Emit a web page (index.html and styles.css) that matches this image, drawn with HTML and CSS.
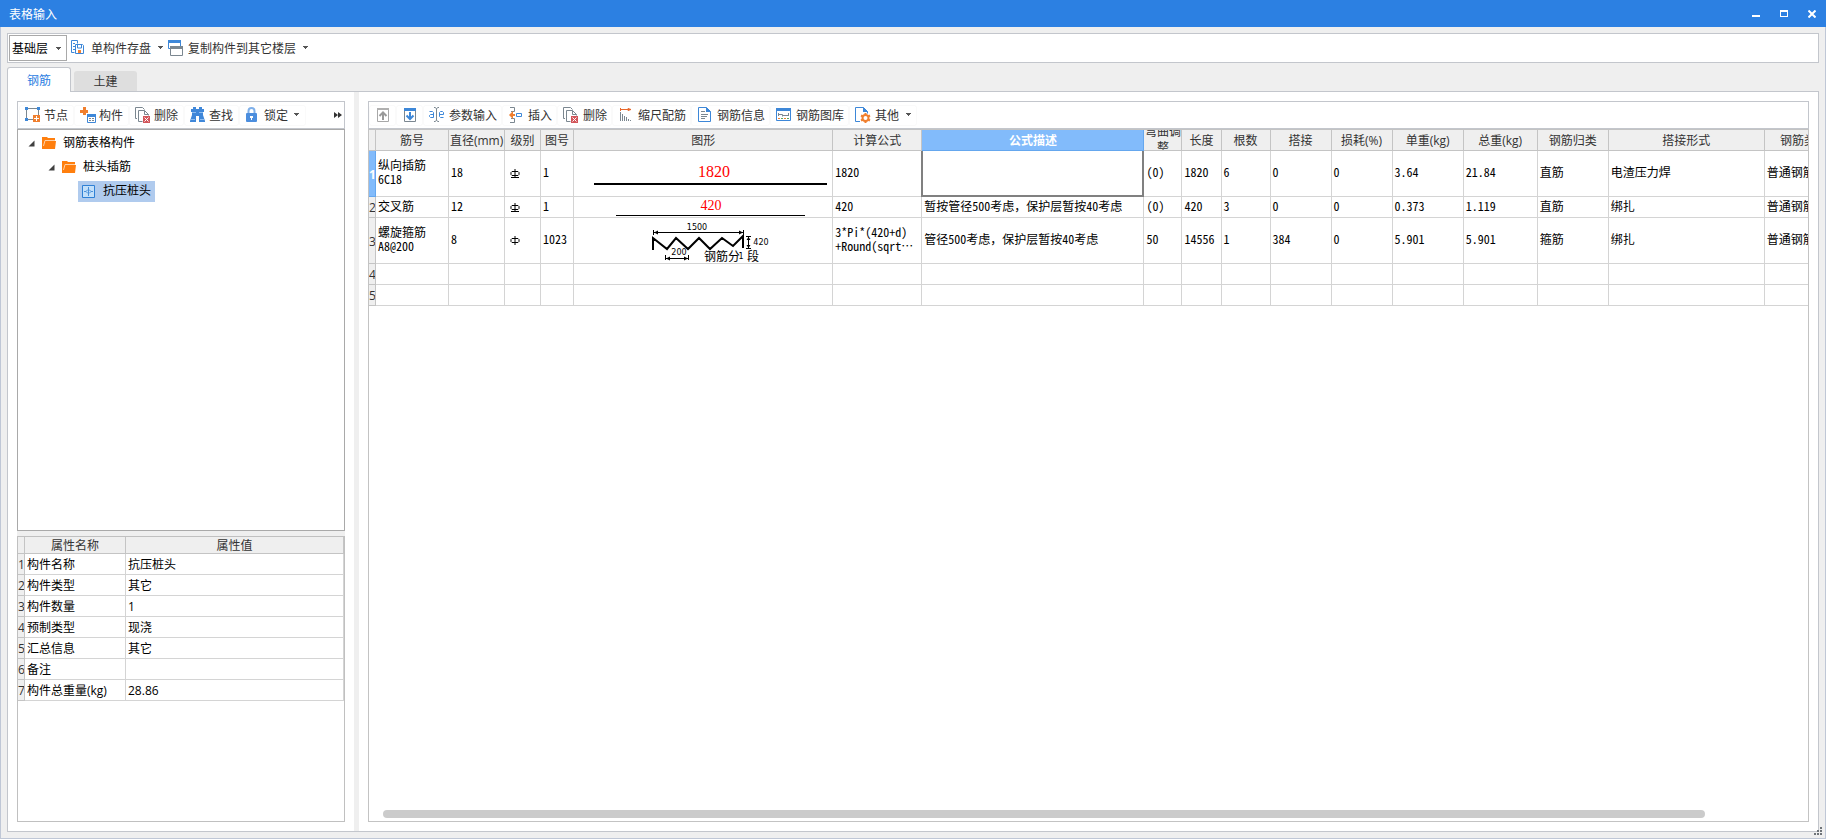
FILE: index.html
```html
<!DOCTYPE html>
<html lang="zh-CN">
<head>
<meta charset="utf-8">
<title>表格输入</title>
<link rel="stylesheet" href="styles.css">
</head>
<body>
<svg class="defs" width="0" height="0" aria-hidden="true">
  <symbol id="caret" viewBox="0 0 6 4"><path d="M0 0h5v1h-1v1h-1v1h-1v-1h-1v-1h-1z" fill="#555"/></symbol>
  <symbol id="delete" viewBox="0 0 16 16">
    <path d="M2 11.500H.5V.5h7l2 2" fill="none" stroke="#7b8790"/>
    <path d="M3.500 14.500V3.500h6l4 4v1M9.500 3.500v4h4M3.500 14.500h4" fill="none" stroke="#7b8790"/>
    <rect x="8" y="9" width="7" height="7" fill="#d2555a"/>
    <path d="M9.500 10.500l4 4m0-4l-4 4" stroke="#fff"/>
  </symbol>
  <symbol id="folder" viewBox="0 0 15 13">
    <path d="M0 12V0h5l1 1h7v3h1l-1 8z" fill="#ff7f0e"/><path d="M1.500 9l1.500-5.500h10" fill="none" stroke="#ffd3a8"/>
  </symbol>
  <symbol id="expanded" viewBox="0 0 7 7"><path d="M6.500.5v6h-6z" fill="#404040"/></symbol>
  <symbol id="grade-plain" viewBox="0 0 10 11"><path d="M2 3.500h6l1 1v2l-1 1H2l-1-1v-2zM5 1v9" fill="none" stroke="#000"/></symbol>
  <symbol id="grade-ribbed" viewBox="0 0 10 11"><path d="M2 3.500h6l1 1v2l-1 1H2l-1-1v-2zM5 1v9M1 9.500h8" fill="none" stroke="#000"/></symbol>
</svg>

<header class="titlebar">
  <h1 class="title">表格输入</h1>
  <div class="window-buttons">
    <button class="window-button" aria-label="最小化"><svg width="8" height="8"><rect y="5" width="8" height="2" fill="#fff"/></svg></button>
    <button class="window-button" aria-label="最大化"><svg width="8" height="8"><path d="M0 0h8v7H0zM1 2v4h6V2z" fill="#fff" fill-rule="evenodd"/></svg></button>
    <button class="window-button" aria-label="关闭"><svg width="8" height="8"><path d="M.5.500l7 7m0-7l-7 7" stroke="#fff" stroke-width="2"/></svg></button>
  </div>
</header>

<main class="workspace">
  <div class="mainbar">
    <div class="combo">
      <select class="combo-select" aria-label="楼层"><option>基础层</option></select>
      <svg class="combo-caret" width="6" height="4"><use href="#caret"/></svg>
    </div>
    <button class="main-button">
      <svg width="16" height="16" viewBox="0 0 16 16">
        <path d="M3.500 12.500h-3V.5h6v3M2 3.500h2M2 6.500h2M2 9.500h2" fill="none" stroke="#3d87d8"/>
        <path d="M4.500 4.500h7l1 1v8h-8z" fill="#fff" stroke="#3d87d8"/>
        <path d="M6.500 5v3h4V5" fill="none" stroke="#3d87d8"/><rect x="7" y="10" width="3" height="3" fill="#f58231"/>
      </svg>
      <span class="label">单构件存盘</span><svg class="caret" width="6" height="4"><use href="#caret"/></svg>
    </button>
    <button class="main-button">
      <svg width="16" height="16" viewBox="0 0 16 16">
        <path d="M.5.500h12v8H.5z" fill="#fff" stroke="#3d87d8"/><rect width="13" height="3" fill="#3d87d8"/>
        <path d="M2.500 6.500h12v9h-12z" fill="#fff" stroke="#7b8790"/><rect x="2" y="6" width="13" height="3" fill="#7b8790"/>
      </svg>
      <span class="label">复制构件到其它楼层</span><svg class="caret" width="6" height="4"><use href="#caret"/></svg>
    </button>
  </div>

  <nav class="tabs">
    <button class="tab tab-active">钢筋</button>
    <button class="tab">土建</button>
  </nav>

  <div class="pane">
    <section class="side">
      <div class="toolbar side-toolbar">
        <button class="tool">
          <svg width="16" height="16" viewBox="0 0 16 16">
            <path d="M1.500 1.500h12v11h-12z" fill="none" stroke="#7b8790"/>
            <path d="M0 0h3v3H0zM12 0h3v3h-3zM0 11h3v3H0z" fill="#3d87d8"/>
            <rect x="8" y="8" width="7" height="7" fill="#f07f2e"/><path d="M9 11.500h5M11.500 9v5" stroke="#fff"/>
          </svg><span class="label">节点</span>
        </button>
        <button class="tool">
          <svg width="16" height="16" viewBox="0 0 16 16">
            <path d="M3 0h3v3h2v3H6v2H3V6H0V3h3z" fill="#f07f2e"/>
            <path d="M7.500 7.500h8v8h-8z" fill="#fff" stroke="#3d87d8"/><rect x="7" y="7" width="9" height="3" fill="#3d87d8"/>
            <path d="M9 11.500h2m1 0h2M9 13.500h2m1 0h2" stroke="#7b8790"/>
          </svg><span class="label">构件</span>
        </button>
        <button class="tool"><svg width="16" height="16"><use href="#delete"/></svg><span class="label">删除</span></button>
        <button class="tool">
          <svg width="16" height="16" viewBox="0 0 16 16">
            <path d="M3 0h3v2h3V0h3v2h2v3h-1v3l2 6v1H9V9H6v6H0v-1l2-6V5H1V2h2z" fill="#3f87d9"/>
            <path d="M2 5.500h4m3 0h4M1 12.500h4m5 0h4" stroke="#8fbdf0"/>
          </svg><span class="label">查找</span>
        </button>
        <button class="tool">
          <svg width="16" height="16" viewBox="0 0 16 16">
            <path d="M3.500 7V4a3 3 0 0 1 6 0v3" fill="none" stroke="#7fb0ea" stroke-width="2"/>
            <rect x="1" y="6" width="11" height="9" rx="1" fill="#4c8ede"/><path d="M5 9h3v2H7v2H6v-2H5z" fill="#fff"/>
          </svg><span class="label">锁定</span><svg class="caret" width="6" height="4"><use href="#caret"/></svg>
        </button>
        <button class="more" aria-label="更多"><svg width="8" height="6"><path d="M0 0l4 3-4 3zM4 0l4 3-4 3z" fill="#333"/></svg></button>
      </div>

      <ul class="tree">
        <li class="node">
          <svg width="7" height="7"><use href="#expanded"/></svg>
          <svg class="folder" width="15" height="13"><use href="#folder"/></svg>
          <span>钢筋表格构件</span>
        </li>
        <li class="node node-child">
          <svg width="7" height="7"><use href="#expanded"/></svg>
          <svg class="folder" width="15" height="13"><use href="#folder"/></svg>
          <span>桩头插筋</span>
        </li>
        <li class="node node-leaf">
          <span class="selected">
            <svg width="13" height="13" viewBox="0 0 13 13">
              <path d="M.5.500h12v12H.5z" fill="#c3e0fa" stroke="#2f80d5"/>
              <path d="M2 6.500h2M9 6.500h2M6.500 2v9M4 6.500l2-2h1l2 2-2 2H6z" stroke="#4a90da" fill="none"/>
            </svg>
            <span>抗压桩头</span>
          </span>
        </li>
      </ul>

      <div class="props">
        <table class="grid props-grid">
          <colgroup><col class="w-num"><col class="w-name"><col></colgroup>
          <thead><tr><th></th><th>属性名称</th><th>属性值</th></tr></thead>
          <tbody>
            <tr><th>1</th><td>构件名称</td><td>抗压桩头</td></tr>
            <tr><th>2</th><td>构件类型</td><td>其它</td></tr>
            <tr><th>3</th><td>构件数量</td><td>1</td></tr>
            <tr><th>4</th><td>预制类型</td><td>现浇</td></tr>
            <tr><th>5</th><td>汇总信息</td><td>其它</td></tr>
            <tr><th>6</th><td>备注</td><td></td></tr>
            <tr><th>7</th><td>构件总重量(kg)</td><td>28.86</td></tr>
          </tbody>
        </table>
      </div>
    </section>

    <div class="splitter"></div>

    <section class="content">
      <div class="toolbar">
        <button class="tool" aria-label="上移"><svg width="16" height="16" viewBox="0 0 16 16">
          <path d="M2.500 1.500h11v13h-11z" fill="#fff" stroke="#a8a8a8"/><rect x="2" y="1" width="12" height="2" fill="#b0b0b0"/><path d="M8 13V6M4.500 9L8 5.500 11.500 9" fill="none" stroke="#999" stroke-width="2"/></svg></button>
        <button class="tool" aria-label="下移"><svg width="16" height="16" viewBox="0 0 16 16">
          <path d="M2.500 1.500h11v13h-11z" fill="#fff" stroke="#7b8790"/><rect x="2" y="1" width="12" height="3" fill="#3d87d8"/><path d="M8 5v7M4.500 8.500L8 12l3.500-3.500" fill="none" stroke="#3d87d8" stroke-width="2"/></svg></button>
        <button class="tool"><svg width="16" height="16" viewBox="0 0 16 16">
          <path d="M.5 4.500h3l1 1v5H1.500l-1-1v-1l1-1h3M10.500 7.500h4V5.500l-1-1h-2l-1 1v4l1 1h3" fill="none" stroke="#3d87d8"/>
          <path d="M5 .5h1l1.500 1L9 .5h1M7.500 1.500v12M5 14.500h1l1.500-1 1.500 1h1" fill="none" stroke="#7b8790"/></svg><span class="label">参数输入</span></button>
        <button class="tool"><svg width="16" height="16" viewBox="0 0 16 16">
          <path d="M2 .5h4.500v4H3M2 15.500h4.500v-4H3" fill="none" stroke="#7b8790"/>
          <path d="M1 8l4-4v3h2v2H5v3z" fill="#f07f2e"/><path d="M8.500 6.500h5v3h-5z" fill="none" stroke="#3d87d8"/></svg><span class="label">插入</span></button>
        <button class="tool"><svg width="16" height="16"><use href="#delete"/></svg><span class="label">删除</span></button>
        <button class="tool"><svg width="16" height="16" viewBox="0 0 16 16">
          <path d="M2 2.500h8M10 1.500l3 1-3 1z" fill="#e8682c" stroke="#e8682c"/><path d="M2.500 1v3" stroke="#e8682c"/>
          <path d="M2.500 5v9M4.500 7v7M6.500 9v5M8.500 10v4M10.500 12v2M12.500 13v1" stroke="#7b8790"/></svg><span class="label">缩尺配筋</span></button>
        <button class="tool"><svg width="16" height="16" viewBox="0 0 16 16">
          <path d="M1.500.500h8l4 4v10h-12z" fill="#fff" stroke="#3d87d8"/><path d="M9 0l5 5H9z" fill="#3d87d8"/>
          <path d="M4 4.500h4M4 7.500h7M4 9.500h6M4 11.500h4" stroke="#7b8790"/></svg><span class="label">钢筋信息</span></button>
        <button class="tool"><svg width="16" height="16" viewBox="0 0 16 16">
          <path d="M.5 1.500h14v12H.5z" fill="#fff" stroke="#3d87d8"/><rect y="1" width="15" height="3" fill="#3d87d8"/>
          <path d="M2.500 6v3M2.500 7.500h4v2M7 8.500h5M12.500 6v3" fill="none" stroke="#7b8790"/><path d="M2 11.500h2m4 0h2" stroke="#f07f2e"/><path d="M5 11.500h2m4 0h2" stroke="#5aa860"/></svg><span class="label">钢筋图库</span></button>
        <button class="tool"><svg width="16" height="16" viewBox="0 0 16 16">
          <path d="M5 14.500H.5V.5h8l4 4v2" fill="none" stroke="#3d87d8"/><path d="M8 0l5 5H8z" fill="#3d87d8"/>
          <circle cx="10.500" cy="11" r="3" fill="#fff" stroke="#f07f2e" stroke-width="2"/><path d="M10.500 6v2M10.500 14v2M6 8.500l2 1M13 12.500l2 1M6 13.500l2-1M13 9.500l2-1" stroke="#f07f2e" stroke-width="2"/></svg><span class="label">其他</span><svg class="caret" width="6" height="4"><use href="#caret"/></svg></button>
      </div>

      <div class="sheet">
        <table class="grid rebar-grid">
          <colgroup>
            <col class="w-num"><col class="w-bar"><col class="w-dia"><col class="w-grade"><col class="w-fig"><col class="w-shape"><col class="w-formula"><col class="w-desc"><col class="w-bend"><col class="w-len"><col class="w-count"><col class="w-lap"><col class="w-lap"><col class="w-unit"><col class="w-total"><col class="w-unit"><col class="w-joint"><col class="w-type">
          </colgroup>
          <thead>
            <tr><th></th><th>筋号</th><th>直径(mm)</th><th>级别</th><th>图号</th><th>图形</th><th>计算公式</th><th class="current">公式描述</th><th class="wrap-cell"><div class="wrap-head">弯曲调整</div></th><th>长度</th><th>根数</th><th>搭接</th><th>损耗(%)</th><th>单重(kg)</th><th>总重(kg)</th><th>钢筋归类</th><th>搭接形式</th><th>钢筋类型</th></tr>
          </thead>
          <tbody>
            <tr class="tall">
              <th class="current">1</th><td>纵向插筋<br>6C18</td><td>18</td>
              <td class="grade-cell"><svg class="grade" width="10" height="11"><use href="#grade-ribbed"/></svg></td>
              <td>1</td>
              <td class="shape"><svg class="drawing" width="258" height="45"><text class="dim-large" x="140" y="26">1820</text><path d="M20 33h233" stroke="#000" stroke-width="2"/></svg></td>
              <td>1820</td><td class="editing"><div class="cursor"></div></td><td>(0)</td><td>1820</td><td>6</td><td>0</td><td>0</td><td>3.64</td><td>21.84</td><td>直筋</td><td>电渣压力焊</td><td>普通钢筋</td>
            </tr>
            <tr>
              <th>2</th><td>交叉筋</td><td>12</td>
              <td class="grade-cell"><svg class="grade" width="10" height="11"><use href="#grade-ribbed"/></svg></td>
              <td>1</td>
              <td class="shape"><svg class="drawing" width="258" height="20"><text class="dim-medium" x="137" y="13">420</text><path d="M42 18.500h189" stroke="#000"/></svg></td>
              <td>420</td><td>暂按管径500考虑<span class="full">，</span>保护层暂按40考虑</td><td>(0)</td><td>420</td><td>3</td><td>0</td><td>0</td><td>0.373</td><td>1.119</td><td>直筋</td><td>绑扎</td><td>普通钢筋</td>
            </tr>
            <tr class="tall">
              <th>3</th><td>螺旋箍筋<br>A8@200</td><td>8</td>
              <td class="grade-cell"><svg class="grade" width="10" height="11"><use href="#grade-plain"/></svg></td>
              <td>1023</td>
              <td class="shape"><svg class="drawing" width="258" height="45">
                <path d="M79.500 12v5M169.500 12v5M79 14.500h91M91.500 37v5M114.500 37v5M91 40.500h23M172 18.500h5M172 30.500h5M174.500 18v13" fill="none" stroke="#000"/>
                <path d="M80 14.500l4-2v4zM169 14.500l-4-2v4zM92 40.500l4-2v4zM114 40.500l-4-2v4zM174.500 19l-2 3h4zM174.500 30l-2-3h4z"/>
                <path d="M79 32V20l14 11 9-11 12 11 11-11 11 11 12-11 11 8 10-10v12" fill="none" stroke="#000" stroke-width="2"/>
                <text class="dim" x="123" y="12">1500</text><text class="dim" x="187" y="27">420</text><text class="dim" x="105" y="37">200</text>
                <text class="note" x="130" y="43">钢筋分</text><text class="dim" x="167" y="41">1</text><text class="note" x="173" y="43">段</text>
              </svg></td>
              <td>3*Pi*(420+d)<br>+Round(sqrt⋯</td><td>管径500考虑<span class="full">，</span>保护层暂按40考虑</td><td>50</td><td>14556</td><td>1</td><td>384</td><td>0</td><td>5.901</td><td>5.901</td><td>箍筋</td><td>绑扎</td><td>普通钢筋</td>
            </tr>
            <tr><th>4</th><td></td><td></td><td></td><td></td><td></td><td></td><td></td><td></td><td></td><td></td><td></td><td></td><td></td><td></td><td></td><td></td><td></td></tr>
            <tr><th>5</th><td></td><td></td><td></td><td></td><td></td><td></td><td></td><td></td><td></td><td></td><td></td><td></td><td></td><td></td><td></td><td></td><td></td></tr>
          </tbody>
        </table>
        <div class="scroll-thumb"></div>
      </div>
    </section>
  </div>
</main>
<svg class="grip" width="8" height="8"><path d="M6 0h2v2H6zM3 3h2v2H3zM6 3h2v2H6zM0 6h2v2H0zM3 6h2v2H3zM6 6h2v2H6z" fill="#6f7478"/></svg>
</body>
</html>
```
FILE: styles.css
```css
* {
  box-sizing: border-box;
}

body {
  display: flex;
  flex-direction: column;
  height: 100vh;
  margin: 0;
  overflow: hidden;
  background: #efefef;
  color: #333;
  font: 12px/16px "Open Sans", "Noto Sans CJK SC", sans-serif;
}

button,
select {
  margin: 0;
  padding: 0;
  border: 0;
  background: none;
  color: inherit;
  font: inherit;
}

svg {
  display: block;
  flex: none;
}

.defs {
  position: absolute;
}

/* Title bar */
.titlebar {
  display: flex;
  flex: none;
  align-items: center;
  justify-content: space-between;
  height: 27px;
  padding: 0 10px 0 9px;
  background: #2c80e2;
  color: #fff;
}

.title {
  margin: 0;
  padding-top: 2px;
  font-size: 12px;
  font-weight: 400;
}

.window-buttons {
  display: flex;
  gap: 20px;
}

.window-button {
  width: 8px;
  height: 8px;
}

/* Window body */
.workspace {
  display: flex;
  flex: 1;
  flex-direction: column;
  min-height: 0;
  padding: 6px;
  border: 1px solid #bfc7d6;
  border-top: 0;
}

.mainbar {
  display: flex;
  flex: none;
  align-items: center;
  height: 30px;
  padding-left: 1px;
  border: 1px solid #c3c6cc;
  background: #fff;
}

.combo {
  position: relative;
  width: 58px;
  height: 26px;
  border: 1px solid #a9a9a9;
  color: #000;
}

.combo-select {
  width: 100%;
  height: 100%;
  padding: 2px 0 0 2px;
  appearance: none;
}

.combo-caret {
  position: absolute;
  top: 11px;
  right: 4px;
}

.main-button {
  display: flex;
  align-items: center;
  gap: 4px;
  height: 26px;
  padding-left: 4px;
}

.label {
  padding-top: 2px;
}

.caret {
  margin-left: 3px;
}

.tabs {
  display: flex;
  flex: none;
  align-items: flex-end;
  gap: 3px;
  height: 28px;
}

.tab {
  width: 63px;
  height: 20px;
  padding-top: 2px;
  border-radius: 3px 3px 0 0;
  background: #dedede;
}

.tab-active {
  z-index: 1;
  width: 64px;
  height: 25px;
  margin-bottom: -1px;
  border: 1px solid #c3c6cc;
  border-bottom: 0;
  background: #fff;
  color: #2c80e2;
}

.pane {
  display: flex;
  flex: 1;
  min-height: 0;
  border: 1px solid #c3c6cc;
  background: #fff;
}

.side {
  display: flex;
  flex: none;
  flex-direction: column;
  width: 346px;
  padding: 9px;
}

.splitter {
  flex: none;
  width: 5px;
  background: #efefef;
}

.content {
  display: flex;
  flex: 1;
  flex-direction: column;
  min-width: 0;
  padding: 9px;
}

/* Toolbars */
.toolbar {
  display: flex;
  flex: none;
  align-items: center;
  height: 28px;
  border: 1px solid #c3c6cc;
}

.tool {
  display: flex;
  flex: none;
  align-items: center;
  gap: 4px;
  height: 21px;
  padding: 0 5px 0 6px;
  border-radius: 3px;
  box-shadow: inset 0 0 0 1px #fafafa;
}

.side-toolbar {
  padding-left: 1px;
}

.side-toolbar .tool {
  gap: 3px;
  padding-right: 6px;
}

.more {
  margin: 0 2px 0 auto;
}

/* Component tree */
.tree {
  flex: 401;
  margin: 0;
  padding: 1px 0 0;
  border: 1px solid #a9a9a9;
  color: #000;
  list-style: none;
}

.node {
  display: flex;
  align-items: center;
  height: 24px;
  padding-left: 10px;
}

.node-child {
  padding-left: 30px;
}

.node-leaf {
  padding-left: 60px;
}

.folder {
  margin: 0 6px 0 7px;
}

.selected {
  display: flex;
  align-items: center;
  gap: 8px;
  height: 21px;
  padding: 0 4px;
  background: #b0cbee;
}

/* Grids */
.grid {
  border-collapse: separate;
  border-spacing: 0;
  table-layout: fixed;
}

.grid th,
.grid td {
  height: 21px;
  padding: 2px 0 0;
  overflow: hidden;
  border-right: 1px solid #d4d4d4;
  border-bottom: 1px solid #d4d4d4;
  white-space: nowrap;
}

.grid td {
  padding-left: 2px;
  color: #000;
}

.grid th {
  border-color: #c4c4c4;
  background: #efefef;
  font-weight: 400;
  text-align: center;
}

.props {
  flex: 286;
  margin-top: 5px;
  border: 1px solid #c0c0c0;
  box-shadow: 0 -5px #efefef;
}

.props-grid {
  width: 100%;
}

.props-grid thead th {
  height: 17px;
  line-height: 14px;
}

.sheet {
  display: flex;
  flex: 1;
  flex-direction: column;
  justify-content: space-between;
  overflow: hidden;
  border: 1px solid #c3c3c3;
}

.rebar-grid {
  flex: none;
  width: 1475px;
}

.rebar-grid td {
  padding: 0 0 2px 2px;
  font-family: "Noto Sans CJK SC", sans-serif;
  font-feature-settings: "hwid";
  line-height: 14px;
}

.rebar-grid .tall td {
  height: 46px;
  padding-bottom: 4px;
}

.full {
  font-feature-settings: normal;
}

.grid th.current {
  border-color: #65a7ee;
  background: #82bbfb;
  color: #fff;
  font-weight: 700;
}

.grid th.wrap-cell,
.rebar-grid td.shape,
.rebar-grid .tall td.shape {
  padding: 0;
}

.rebar-grid td.grade-cell,
.rebar-grid .tall td.grade-cell {
  padding: 0 0 0 5px;
}

.rebar-grid td.editing {
  position: relative;
  overflow: visible;
}

.cursor {
  position: absolute;
  inset: 0 -1px -1px -1px;
  border: 2px solid #808080;
  border-top: 0;
}

.wrap-head {
  display: flex;
  align-items: center;
  justify-content: center;
  height: 20px;
  overflow: hidden;
  line-height: 16px;
  white-space: normal;
}

.dim-large,
.dim-medium {
  fill: #f00;
  font-family: "Liberation Serif", serif;
  text-anchor: middle;
}

.dim-large {
  font-size: 16px;
}

.dim-medium {
  font-size: 14px;
}

.dim {
  font: 8px "DejaVu Sans", sans-serif;
  text-anchor: middle;
}

.note {
  font-size: 12px;
}

.w-num { width: 7px; }
.w-name { width: 101px; }
.w-bar { width: 73px; }
.w-dia { width: 56px; }
.w-grade { width: 36px; }
.w-fig { width: 33px; }
.w-shape { width: 259px; }
.w-formula { width: 89px; }
.w-desc { width: 222px; }
.w-bend { width: 38px; }
.w-len { width: 39px; }
.w-count { width: 49px; }
.w-lap { width: 61px; }
.w-unit { width: 71px; }
.w-total { width: 74px; }
.w-joint { width: 156px; }
.w-type { width: 79px; }

.scroll-thumb {
  height: 8px;
  margin: 0 103px 3px 14px;
  border-radius: 4px;
  background: #cbcbcb;
}

.grip {
  position: absolute;
  right: 4px;
  bottom: 4px;
}
```
